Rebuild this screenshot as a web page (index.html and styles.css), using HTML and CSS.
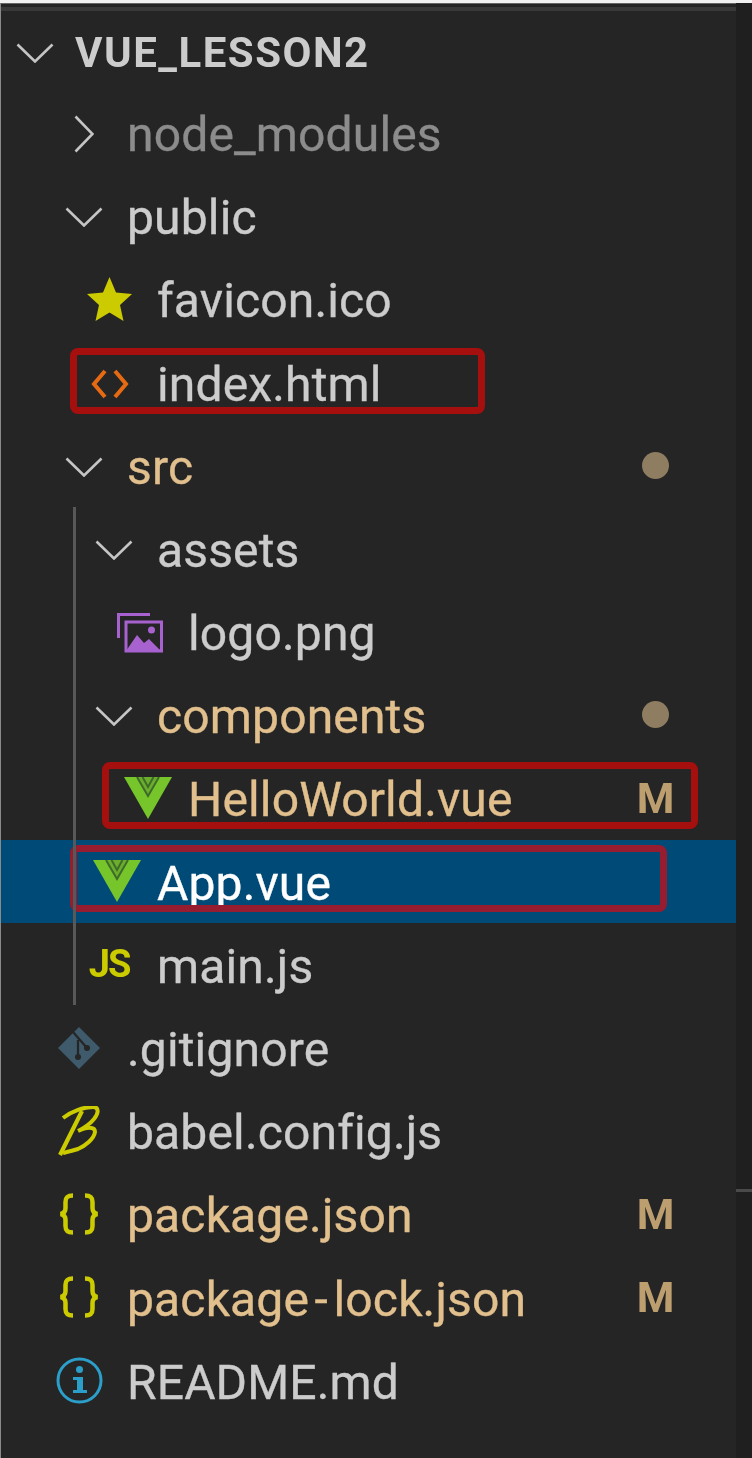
FILE: index.html
```html
<!DOCTYPE html>
<html lang="en">
<head>
<meta charset="utf-8">
<title>Explorer</title>
<link rel="stylesheet" href="styles.css">
</head>
<body>
<svg class="defs" width="0" height="0" aria-hidden="true">
  <symbol id="chev-down" viewBox="0 0 38 20"><path d="M1.5 1.5 19 18.5 36.5 1.5" fill="none" stroke="#c5c5c5" stroke-width="2.6"/></symbol>
  <symbol id="vue" viewBox="0 0 48 42">
    <path d="M0 0H48L24 42Z" fill="#76c52b"/>
    <path d="M13 0H35L24 19Z" fill="#6aae2b"/>
    <path d="M13 0 24 19 35 0" fill="none" stroke="#3f6b2a" stroke-width="2"/>
    <path d="M18.500 0 24 10 29.500 0" fill="none" stroke="#3f6b2a" stroke-width="2"/>
  </symbol>
  <symbol id="braces" viewBox="0 0 40 42">
    <path d="M14 2.500C8 2.500 6.500 5 6.500 9V15C6.500 19 4.500 20.500 1.500 21 4.500 21.500 6.500 23 6.500 27V33C6.500 37 8 39.500 14 39.500M26 2.500C32 2.500 33.500 5 33.500 9V15C33.500 19 35.500 20.500 38.500 21 35.500 21.500 33.500 23 33.500 27V33C33.500 37 32 39.500 26 39.500" fill="none" stroke="#cbcb00" stroke-width="4.500"/>
  </symbol>
</svg>
<div class="window">
<main class="panel">
  <div class="row root">
    <span class="icon"><svg class="ic-chev" width="38" height="20"><use href="#chev-down"/></svg></span>
    <span class="label">VUE_LESSON2</span>
  </div>
  <div class="row lvl1 muted">
    <span class="icon"><svg class="chev" width="20" height="38" viewBox="0 0 20 38"><path d="M1.5 1.5 18.5 19 1.5 36.5" fill="none" stroke="#c5c5c5" stroke-width="2.6"/></svg></span>
    <span class="label">node_modules</span>
  </div>
  <div class="row lvl1">
    <span class="icon"><svg class="chev" width="38" height="20"><use href="#chev-down"/></svg></span>
    <span class="label">public</span>
  </div>
  <div class="row lvl2">
    <span class="icon"><svg width="45" height="44" viewBox="0 0 45 44"><path d="M22.500 0 29 15.500 45 17 33 28 36.500 44 22.500 35.500 8.500 44 12 28 0 17 16 15.500Z" fill="#cbcb00"/></svg></span>
    <span class="label">favicon.ico</span>
  </div>
  <div class="row lvl2">
    <span class="icon"><svg class="nudge code" width="38" height="30" viewBox="0 0 38 30"><path d="M14 2 3 15 14 28M24 2 35 15 24 28" fill="none" stroke="#e66a12" stroke-width="4"/></svg></span>
    <span class="label">index.html</span>
    <span class="mark mark-index"></span>
  </div>
  <div class="row lvl1 modified">
    <span class="icon"><svg class="chev" width="38" height="20"><use href="#chev-down"/></svg></span>
    <span class="label">src</span>
    <span class="badge"><span class="dot"></span></span>
  </div>
  <div class="group">
    <div class="row lvl2">
      <span class="icon"><svg class="chev" width="38" height="20"><use href="#chev-down"/></svg></span>
      <span class="label">assets</span>
    </div>
    <div class="row lvl3">
      <span class="icon"><svg class="nudge" width="46" height="40" viewBox="0 0 46 40"><path d="M33 1.500H1.500V25" fill="none" stroke="#a862cf" stroke-width="3"/><path d="M9 9H44.500V38H9Z" fill="none" stroke="#a862cf" stroke-width="3"/><path d="M9 38 20 22 27 30 32 26 44 38Z" fill="#a862cf"/><circle cx="34.500" cy="17" r="3.500" fill="#a862cf"/></svg></span>
      <span class="label">logo.png</span>
    </div>
    <div class="row lvl2 modified">
      <span class="icon"><svg class="chev" width="38" height="20"><use href="#chev-down"/></svg></span>
      <span class="label">components</span>
      <span class="badge"><span class="dot"></span></span>
    </div>
    <div class="row lvl3 modified">
      <span class="icon"><svg class="ic-vue" width="48" height="42"><use href="#vue"/></svg></span>
      <span class="label">HelloWorld.vue</span>
      <span class="badge">M</span>
      <span class="mark mark-hello"></span>
    </div>
    <div class="row lvl2 selected">
      <span class="icon"><svg class="ic-vue" width="48" height="42"><use href="#vue"/></svg></span>
      <span class="label">App.vue</span>
      <span class="mark mark-app"></span>
    </div>
    <div class="row lvl2">
      <span class="icon"><span class="js">JS</span></span>
      <span class="label">main.js</span>
    </div>
  </div>
  <div class="row lvl1">
    <span class="icon"><svg width="42" height="42" viewBox="0 0 42 42"><path d="M21 0 42 21 21 42 0 21Z" fill="#3e5a6b"/><path d="M15 5 29 21M20 13V29" fill="none" stroke="#252526" stroke-width="2.200"/><circle cx="20" cy="30" r="3" fill="#252526"/><circle cx="29" cy="21" r="3" fill="#252526"/></svg></span>
    <span class="label">.gitignore</span>
  </div>
  <div class="row lvl1">
    <span class="icon"><svg width="42" height="50" viewBox="0 0 42 50"><path d="M5 12C14 5 26 1 35 1 41 1 41 7 36 13 32 18 26 22 20 25 28 21 37 20 37 26 36 33 27 40 20 43 14 45 9 46 5 47" fill="none" stroke="#cbcb00" stroke-width="4"/><path d="M24 5 13 27 2 49" fill="none" stroke="#cbcb00" stroke-width="4.200"/></svg></span>
    <span class="label">babel.config.js</span>
  </div>
  <div class="row lvl1 modified">
    <span class="icon"><svg width="40" height="42"><use href="#braces"/></svg></span>
    <span class="label">package.json</span>
    <span class="badge">M</span>
  </div>
  <div class="row lvl1 modified">
    <span class="icon"><svg width="40" height="42"><use href="#braces"/></svg></span>
    <span class="label">package<span class="hyphen">-</span>lock.json</span>
    <span class="badge">M</span>
  </div>
  <div class="row lvl1">
    <span class="icon"><svg width="47" height="47" viewBox="0 0 47 47"><circle cx="23.500" cy="23.500" r="21.500" fill="none" stroke="#2b9fc9" stroke-width="3"/><circle cx="23.500" cy="12.500" r="3.500" fill="#2b9fc9"/><path d="M17 20H27V33H31V36H17V33H21V23H17Z" fill="#2b9fc9"/></svg></span>
    <span class="label">README.md</span>
  </div>
</main>
<aside class="gutter"><span class="gutter-tick"></span></aside>
</div>
</body>
</html>
```

FILE: styles.css
```css
* { box-sizing: border-box; }
html, body { margin: 0; padding: 0; background: #252526; }
.defs { position: absolute; }
.window {
  display: flex;
  width: 752px;
  height: 1458px;
  overflow: hidden;
  font-family: Roboto, "Liberation Sans", sans-serif;
  font-size: 48px;
  color: #cccccc;
  border-top: 3px solid #f2f2f2;
}
.panel {
  position: relative;
  width: 736px;
  padding-top: 3.670px;
  background: #252526;
  border-left: 1.5px solid #8a8a8a;
  border-top: 1px solid #666;
  filter: blur(0.5px);
}
.panel::before {
  content: "";
  position: absolute;
  left: 0; right: 0; top: 3px;
  height: 4px;
  background: #3a3a3b;
}
.gutter { position: relative; flex: 1; background: #1f1f1f; }
.gutter-tick { position: absolute; left: 0; right: 0; top: 1186px; height: 3px; background: #4a4a4a; }
.group { position: relative; }
.group::after {
  content: "";
  position: absolute;
  left: 72px;
  top: 0;
  bottom: 1px;
  width: 3px;
  background: #585858;
}
.row {
  position: relative;
  display: flex;
  align-items: center;
  height: 83.2px;
  padding-right: 62.500px;
  white-space: nowrap;
}
.icon {
  display: flex;
  flex: none;
  align-items: center;
  justify-content: center;
  width: 96px;
}
.icon svg { display: block; }
.root .icon { width: 68px; margin-right: 6px; }
.root .icon svg { margin-top: 8px; }
.root .label {
  margin-top: 6px;
  font-size: 42px;
  font-weight: 700;
  letter-spacing: 1.5px;
  -webkit-text-stroke: 0;
}
.lvl1 { padding-left: 30px; }
.lvl2 { padding-left: 60px; }
.lvl3 { padding-left: 91px; }
.label {
  flex: none;
  margin-top: 4px;
  letter-spacing: 0.15px;
  -webkit-text-stroke: 0.35px currentColor;
}
.hyphen { margin: 0 5.500px; }
.icon .chev { margin-left: 10px; margin-top: 3px; }
.icon .nudge { margin-top: 3px; }
.icon .code { margin-left: 2px; }
.ic-vue { margin-left: 15px; }
.muted { color: #8c8c8c; }
.modified { color: #e2c08d; }
.selected { background: #004a77; color: #ffffff; }
.badge {
  display: flex;
  align-items: center;
  justify-content: center;
  width: 36px;
  margin-left: auto;
  font-size: 43px;
  font-weight: 700;
  color: #bc9e6f;
}
.dot { width: 27px; height: 27px; border-radius: 50%; background: #8e7d60; }
.js { font-size: 38px; font-weight: 700; letter-spacing: -2px; color: #cbcb00; line-height: 1; }
.mark {
  position: absolute;
  border: 7px solid #a50f0d;
  border-radius: 8px;
}
.mark-index { left: 68.500px; top: 7.500px; width: 415px; height: 66px; }
.mark-hello { left: 100.500px; top: 5.500px; width: 596px; height: 67px; }
.mark-app { left: 68.500px; top: 5.300px; width: 597px; height: 67px; border-color: #961c30; }
```
